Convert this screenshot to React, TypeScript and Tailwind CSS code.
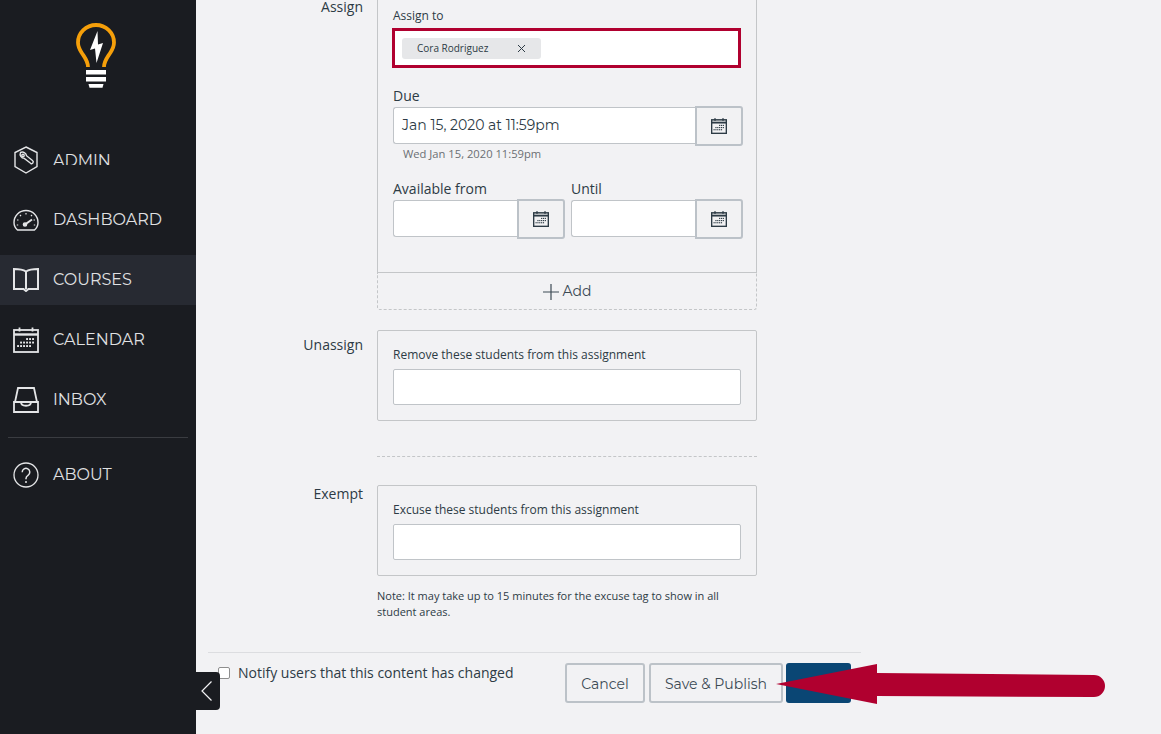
const navFont = "font-['Montserrat','Inter','Liberation_Sans',sans-serif]"

function AdminIcon() {
  return (
    <svg width="26" height="28" viewBox="0 0 26 28" fill="none" stroke="#e4e5e7" strokeWidth="1.400">
      <path d="M13 1l11 5.500v14L13 27 2 20.500v-14z" />
      <path d="M7.500 6.500a4.200 4.200 0 0 1 6 3.200l6 4.800c1.800 1.500 0 4-1.900 2.800l-6.300-4.900a4.200 4.200 0 0 1-3.800-5.900z" />
      <circle cx="10" cy="9.500" r="1.200" />
    </svg>
  )
}

function GaugeIcon() {
  return (
    <svg width="26" height="22" viewBox="0 0 26 22" fill="none" stroke="#e4e5e7" strokeWidth="1.400">
      <path d="M4.500 21C2.200 19 1 16.200 1 13.500a12 12 0 0 1 24 0c0 2.700-1.200 5.500-3.500 7.500z" />
      <path d="M13 4v1.500M7 6l1 1.200M19 6l-1 1.200M4 11h1.500M20.500 11H22M3.800 16h1.400M20.800 16h1.400" strokeWidth="1.200" />
      <path d="M12 15.500l7-5" strokeWidth="2" />
      <circle cx="12" cy="15.500" r="1.600" fill="#e4e5e7" />
    </svg>
  )
}

function BookIcon() {
  return (
    <svg width="26" height="24" viewBox="0 0 26 24" fill="none" stroke="#e4e5e7" strokeWidth="2">
      <path d="M13 3.500C10 1.500 6 1 1 1v20h9.500l2.500 2 2.500-2H25V1c-5 0-9 .5-12 2.500z" />
      <path d="M13 3.500V21" />
    </svg>
  )
}

function CalendarIcon({ size = 26, color = '#e4e5e7', stroke = 1.8 }: { size?: number; color?: string; stroke?: number }) {
  const dots = [
    [14, 12], [17, 12], [20, 12],
    [8, 15.500], [11, 15.500], [14, 15.500], [17, 15.500], [20, 15.500],
    [5, 19], [8, 19], [11, 19], [14, 19], [17, 19],
  ]
  return (
    <svg width={size} height={size} viewBox="0 0 26 26" fill="none" stroke={color} strokeWidth={stroke}>
      <rect x="1" y="3" width="24" height="22" />
      <path d="M1 7.500h24" strokeWidth={stroke + 0.6} />
      <path d="M6.500 0.500v4M19.500 0.500v4" />
      {dots.map(([x, y]) => (
        <rect key={`${x}-${y}`} x={x - 0.9} y={y - 0.9} width="1.900" height="1.900" fill={color} stroke="none" />
      ))}
    </svg>
  )
}

function InboxIcon() {
  return (
    <svg width="26" height="26" viewBox="0 0 26 26" fill="none" stroke="#e4e5e7" strokeWidth="1.800">
      <path d="M5 1h16l3 14H2z" />
      <path d="M1 15h7c0 5 10 5 10 0h7v10H1z" />
    </svg>
  )
}

function HelpIcon() {
  return (
    <svg width="26" height="26" viewBox="0 0 26 26" fill="none" stroke="#e4e5e7" strokeWidth="1.300">
      <circle cx="13" cy="13" r="12" />
      <path d="M9.200 10.200a3.800 3.800 0 1 1 5.800 3.200c-1.300.8-2 1.500-2 3v.8" strokeWidth="1.500" />
      <circle cx="13" cy="20" r="1" fill="#e4e5e7" stroke="none" />
    </svg>
  )
}

function Logo() {
  return (
    <svg width="40" height="66" viewBox="0 0 40 66" fill="none">
      <path
        d="M12 44c0-6-3-9-6.500-14.500C3 25.500 2 22.500 2 19.500 2 10 10 2 20 2s18 8 18 17.500c0 3-1 6-3.500 10C31 35 28 38 28 44"
        stroke="#f59f0a"
        strokeWidth="3.800"
      />
      <path d="M21.500 8l-7.500 19 5-1.500L20.500 40l6.500-20-5 1.500z" fill="#fff" />
      <rect x="10" y="47" width="20" height="4.500" fill="#fff" />
      <rect x="10" y="54" width="20" height="4.500" fill="#fff" />
      <path d="M12.500 61h15l-1 3.800h-13z" fill="#fff" />
    </svg>
  )
}

function NavItem({ label, icon, active, clipped }: { label: string; icon: React.ReactNode; active?: boolean; clipped?: boolean }) {
  return (
    <div className={`flex h-[50px] items-center ${active ? 'bg-[#272a32]' : ''}`}>
      <div className="flex w-[53px] justify-start pl-[13px]">{icon}</div>
      <span className={`${navFont} text-[16px] leading-none text-[#e0e1e3] ${clipped ? '-mt-[2px] h-[12px] overflow-hidden' : ''}`}>{label}</span>
    </div>
  )
}

function DateField({ value, className }: { value?: string; className: string }) {
  return (
    <div className={`flex items-start ${className}`}>
      <div className={`${navFont} mt-[1px] flex h-[37px] min-w-0 flex-1 items-center rounded-l-[3px] border border-r-0 border-[#c0c4c8] bg-white pl-[8px] text-[14px] text-[#2d3b45]`}>
        {value}
      </div>
      <div className="flex h-[40px] w-[48px] items-center justify-center rounded-r-[3px] border-2 border-[#bcc2c8] bg-[#f2f2f3]">
        <CalendarIcon size={16} color="#2d3b45" stroke={2.4} />
      </div>
    </div>
  )
}

function StudentBox({ label }: { label: string }) {
  return (
    <div className="w-[380px] rounded-[2px] border border-[#c4c6c8] px-[15px] pt-[16px] pb-[15px]">
      <div className="text-[12px] leading-[16px] text-[#2d3b45]">{label}</div>
      <div className="mt-[6px] h-[36px] rounded-[2px] border border-[#c0c4c8] bg-white" />
    </div>
  )
}

export default function App() {
  return (
    <div className="relative flex h-[734px] w-full overflow-hidden bg-[#f2f2f4] font-['Open_Sans',sans-serif]">
      <aside className="flex h-full w-[196px] shrink-0 flex-col bg-[#1a1c21]">
        <div className="flex h-[135px] justify-center pt-[23px] pr-[5px]">
          <Logo />
        </div>
        <div className="flex flex-col gap-[10px]">
          <NavItem label="ADMIN" icon={<AdminIcon />} clipped />
          <NavItem label="DASHBOARD" icon={<GaugeIcon />} />
          <NavItem label="COURSES" icon={<BookIcon />} active />
          <NavItem label="CALENDAR" icon={<CalendarIcon />} />
          <NavItem label="INBOX" icon={<InboxIcon />} />
        </div>
        <div className="mx-[8px] mt-[12px] mb-[12px] border-t border-[#3a3c41]" />
        <NavItem label="ABOUT" icon={<HelpIcon />} />
      </aside>

      <main className="w-[665px] shrink-0 pl-[12px]">
        <section className="flex">
          <div className="w-[155px] pr-0 text-right text-[14px] leading-[14px] text-[#2d3b45]">Assign</div>
          <div className="ml-[14px] w-[380px]">
            <div className="h-[273px] border-x border-b border-[#c4c6c8] px-[15px] pt-[8px]">
              <div className="text-[12px] leading-[16px] text-[#2d3b45]">Assign to</div>
              <div className="-ml-px mt-[4px] flex h-[40px] items-center border-[3px] border-[#b0002f] bg-white pl-[7px]">
                <div className="flex h-[21px] w-[139px] items-center justify-between rounded-[3px] bg-[#e6e7e9] pr-[15px] pl-[15px] text-[10px] text-[#2d3b45]">
                  Cora Rodriguez
                  <svg width="9" height="9" viewBox="0 0 9 9" stroke="#2d3b45" strokeWidth="1">
                    <path d="M1 1l7 7M8 1l-7 7" />
                  </svg>
                </div>
              </div>
              <div className="mt-[18px] text-[14px] leading-[20px] text-[#2d3b45]">Due</div>
              <DateField value="Jan 15, 2020 at 11:59pm" className="w-[350px]" />
              <div className="pl-[10px] text-[11.200px] leading-[15px] text-[#6b6f73]">Wed Jan 15, 2020 11:59pm</div>
              <div className="mt-[18px] flex w-[350px] gap-[6px]">
                <div className="w-[172px]">
                  <div className="text-[14px] leading-[20px] text-[#2d3b45]">Available from</div>
                  <DateField className="w-full" />
                </div>
                <div className="w-[172px]">
                  <div className="text-[14px] leading-[20px] text-[#2d3b45]">Until</div>
                  <DateField className="w-full" />
                </div>
              </div>
            </div>
            <div className={`${navFont} flex h-[37px] items-center justify-center gap-[4px] rounded-b-[3px] border-x border-b border-dashed border-[#c4c6c8] pt-[1px] text-[14px] text-[#3c4a54]`}>
              <svg width="16" height="16" viewBox="0 0 16 16" stroke="#3c4a54" strokeWidth="1.200">
                <path d="M8 0v16M0 8h16" />
              </svg>
              Add
            </div>
          </div>
        </section>

        <section className="mt-[20px] flex">
          <div className="w-[155px] pt-[6px] text-right text-[14px] leading-[18px] text-[#2d3b45]">Unassign</div>
          <div className="ml-[14px]">
            <StudentBox label="Remove these students from this assignment" />
          </div>
        </section>

        <div className="mt-[35px] ml-[169px] w-[380px] border-t border-dashed border-[#c4c6c8]" />

        <section className="mt-[28px] flex">
          <div className="w-[155px] text-right text-[14px] leading-[18px] text-[#2d3b45]">Exempt</div>
          <div className="ml-[14px]">
            <StudentBox label="Excuse these students from this assignment" />
            <p className="mt-[12px] w-[360px] text-[11px] leading-[16px] text-[#2d3b45]">
              Note: It may take up to 15 minutes for the excuse tag to show in all student areas.
            </p>
          </div>
        </section>

        <div className="mt-[32px] border-t border-[#dcdde0]" />
        <div className="mt-[10px] flex items-start">
          <label className="mt-[1px] flex items-center gap-[8px] pl-[10px] text-[14px] leading-[18px] text-[#2d3b45]">
            <span className="h-[12px] w-[12px] rounded-[2px] border border-[#8e8e8e] bg-white" />
            Notify users that this content has changed
          </label>
          <div className={`${navFont} mr-[10px] ml-auto flex text-[14px] text-[#3c4a54]`}>
            <div className="flex h-[40px] w-[80px] items-center justify-center rounded-[3px] border-2 border-[#bcc2c8] pt-[2px]">Cancel</div>
            <div className="ml-[4px] flex h-[40px] w-[134px] items-center justify-center rounded-[3px] border-2 border-[#bcc2c8] pt-[2px]">Save &amp; Publish</div>
            <div className="ml-[3px] h-[40px] w-[65px] rounded-[3px] bg-[#0a4674]" />
          </div>
        </div>
      </main>

      {/* collapse tab over the sidebar edge */}
      <div className="absolute top-[672px] left-[196px] flex h-[38px] w-[24px] items-center justify-center rounded-r-[4px] bg-[#1a1c21] pr-[3px]">
        <svg width="11" height="20" viewBox="0 0 11 20" fill="none" stroke="#f2f2f4" strokeWidth="1.200">
          <path d="M10.500 .5L1 10l9.500 9.500" />
        </svg>
      </div>

      {/* annotation arrow */}
      <svg className="absolute top-[660px] left-[770px]" width="340" height="50" viewBox="0 0 340 50">
        <path d="M6 24L107 4v9l217 2a11 11 0 0 1 0 22L107 36v8z" fill="#b0002f" />
      </svg>
    </div>
  )
}
